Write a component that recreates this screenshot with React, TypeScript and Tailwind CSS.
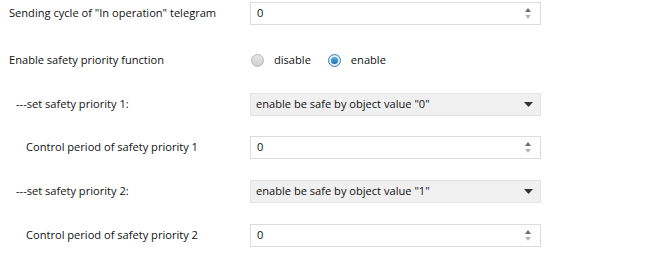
import React from "react";

const FONT = { fontFamily: '"Segoe UI", "Open Sans", "Noto Sans", sans-serif' };

function Spin() {
  return (
    <div className="flex flex-col items-center gap-[3px] mr-[9px]">
      <svg width="6" height="4" viewBox="0 0 6 4"><path d="M3 0 L6 4 L0 4 Z" fill="#6b6b6b" /></svg>
      <svg width="6" height="4" viewBox="0 0 6 4"><path d="M0 0 L6 0 L3 4 Z" fill="#b5b5b5" /></svg>
    </div>
  );
}

function NumberBox({ value }: { value: string }) {
  return (
    <div className="w-[291px] h-[23px] border border-[#dcdcdc] bg-white flex items-center justify-between pl-[6px]">
      <span>{value}</span>
      <Spin />
    </div>
  );
}

function Select({ text }: { text: string }) {
  return (
    <div className="w-[291px] h-[23px] border border-[#e3e3e3] bg-[#f0f0f0] flex items-center justify-between pl-[5px] pr-[7px]">
      <span>{text}</span>
      <svg width="9" height="5" viewBox="0 0 9 5"><path d="M0 0 L9 0 L4.5 5 Z" fill="#333" /></svg>
    </div>
  );
}

function Radio({ checked }: { checked?: boolean }) {
  return (
    <span
      className={`w-[13px] h-[13px] rounded-full border flex items-center justify-center ${checked ? "border-[#3c7fb1] bg-[#dceaf5]" : "border-[#b8b8b8] bg-gradient-to-b from-[#e6e6e6] to-[#d0d0d0]"}`}
    >
      {checked && <span className="w-[7px] h-[7px] rounded-full bg-gradient-to-b from-[#4fb4e8] to-[#1d6fa8]" />}
    </span>
  );
}

function Row({ label, indent, className, children }: { label: string; indent: string; className: string; children: React.ReactNode }) {
  return (
    <div className={`flex items-center h-[23px] ${className}`}>
      <div className={`w-[250px] ${indent}`}>{label}</div>
      {children}
    </div>
  );
}

export default function App() {
  return (
    <div className="w-[669px] h-[273px] bg-white text-[11.1px] text-[#111] pt-[2px] overflow-hidden" style={FONT}>
      <Row label={'Sending cycle of "In operation" telegram'} indent="pl-[9px]" className="">
        <NumberBox value="0" />
      </Row>
      <Row label="Enable safety priority function" indent="pl-[9px]" className="mt-[24px]">
        <div className="flex items-center">
          <span className="ml-[1px]"><Radio /></span>
          <span className="ml-[10px]">disable</span>
          <span className="ml-[17px]"><Radio checked /></span>
          <span className="ml-[10px]">enable</span>
        </div>
      </Row>
      <Row label="---set safety priority 1:" indent="pl-[16px]" className="mt-[21px]">
        <Select text={'enable be safe by object value "0"'} />
      </Row>
      <Row label="Control period of safety priority 1" indent="pl-[26px]" className="mt-[20px]">
        <NumberBox value="0" />
      </Row>
      <Row label="---set safety priority 2:" indent="pl-[16px]" className="mt-[21px]">
        <Select text={'enable be safe by object value "1"'} />
      </Row>
      <Row label="Control period of safety priority 2" indent="pl-[26px]" className="mt-[21px]">
        <NumberBox value="0" />
      </Row>
    </div>
  );
}
